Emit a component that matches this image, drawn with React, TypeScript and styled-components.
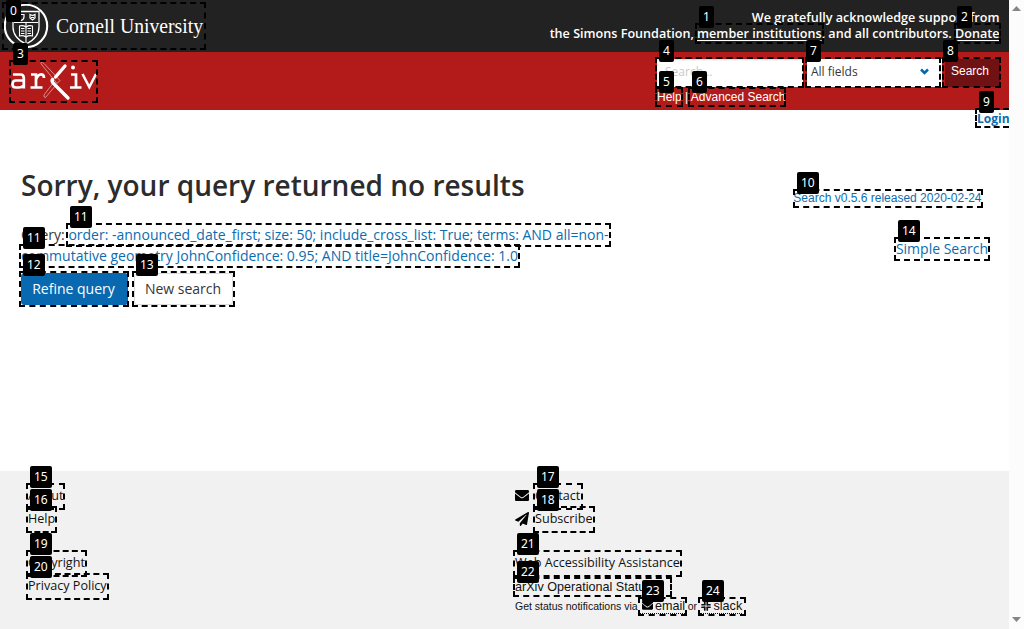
import React from "react";
import styled, { createGlobalStyle } from "styled-components";

const sans = `"Open Sans", "Noto Sans", sans-serif`;
const arial = `"Liberation Sans", Arial, sans-serif`;

const Global = createGlobalStyle`
  *, *::before, *::after { box-sizing: border-box; }
  html, body { margin: 0; overflow: hidden; }
  body { font-family: ${sans}; background: #fff; color: #222; }
`;

const Screen = styled.div`
  position: relative;
  display: flex;
  width: 1024px;
  height: 629px;
  overflow: hidden;
`;
const Page = styled.div`
  display: flex;
  flex-direction: column;
  width: 1009px;
  overflow: hidden;
`;
const Scrollbar = styled.div`
  width: 15px;
  background: #fcfcfc;
  display: flex;
  flex-direction: column;
  justify-content: space-between;
  align-items: center;
  padding: 6px 0 7px;
  svg { display: block; }
`;
const TopBar = styled.div`
  flex: none;
  height: 52px;
  background: #222;
  color: #fff;
  display: flex;
  justify-content: space-between;
  padding: 2px 9.5px 0 4px;
`;
const Sponsors = styled.div`
  padding-top: 8px;
  text-align: right;
  font-size: 12.6px;
  line-height: 16px;
  font-weight: 600;
  white-space: nowrap;
  a { text-decoration: underline; text-underline-offset: 2px; }
`;
const Banner = styled.header`
  flex: none;
  height: 58px;
  background: #b31b1b;
  display: flex;
  justify-content: space-between;
  padding: 7px 9px 0 10px;
`;
const SearchArea = styled.div`
  width: 343px;
`;
const Fields = styled.div`
  display: flex;
  gap: 3px;
  height: 28px;
`;
const Input = styled.div`
  width: 146px;
  background: #fff;
  box-shadow: inset 0 1px 2px rgba(10, 10, 10, 0.15);
  color: #c9c9c9;
  font: 12px/25px ${sans};
  padding-left: 8px;
`;
const Select = styled.div`
  width: 135px;
  margin-left: 1px;
  background: #fff;
  color: #363636;
  font: 12px/24px ${sans};
  padding: 0 13px 3px 4px;
  display: flex;
  align-items: center;
  justify-content: space-between;
`;
const SearchButton = styled.div`
  flex: 1;
  background: #701113;
  color: #fff;
  font: 12px/25px ${arial};
  padding-right: 5px;
  text-align: center;
`;
const SearchLinks = styled.div`
  color: #fff;
  font: 12px/20px ${arial};
`;
const LoginRow = styled.div`
  flex: none;
  height: 48px;
  padding-left: 977px;
  font-size: 12px;
  line-height: 17px;
  font-weight: 700;
  white-space: nowrap;
  color: #0a6cb1;
`;
const Main = styled.main`
  flex: none;
  height: 313px;
  padding: 3px 21px 0;
  display: flex;
  justify-content: space-between;
`;
const Heading = styled.h1`
  margin: 0 0 15px;
  font-size: 28px;
  line-height: 48px;
  font-weight: 600;
  color: #2c2c2c;
  white-space: nowrap;
`;
const Query = styled.p`
  margin: 0 0 7px;
  font-size: 14px;
  line-height: 21px;
  color: #363636;
  white-space: nowrap;
`;
const Link = styled.a`
  color: #0a6cb1;
`;
const Buttons = styled.div`
  display: flex;
  gap: 6px;
`;
const Button = styled.div<{ $primary?: boolean }>`
  width: ${(p) => (p.$primary ? 107 : 99)}px;
  height: 32px;
  padding-right: ${(p) => (p.$primary ? 2 : 1)}px;
  border: 1px solid ${(p) => (p.$primary ? "#0868b0" : "#dbdbdb")};
  border-radius: 3px;
  background: ${(p) => (p.$primary ? "#0868b0" : "#fff")};
  color: ${(p) => (p.$primary ? "#fff" : "#363636")};
  font-size: 14px;
  line-height: 29px;
  text-align: center;
  white-space: nowrap;
`;
const Side = styled.div`
  display: flex;
  flex-direction: column;
  align-items: flex-end;
  padding-top: 29px;
  white-space: nowrap;
`;
const Release = styled(Link)`
  margin-right: 6.5px;
  font: 12px/16px ${arial};
`;
const Simple = styled(Link)`
  margin-top: 32px;
  font-size: 14px;
  line-height: 21px;
`;
const Footer = styled.footer`
  flex: 1;
  background: #f1f1f1;
  display: flex;
  padding: 13px 28px 0;
  color: #111;
`;
const FooterCol = styled.div<{ $width: number }>`
  width: ${(p) => p.$width}px;
  white-space: nowrap;
`;
const FooterGroup = styled.div`
  height: 67px;
`;
const FooterItem = styled.div`
  display: flex;
  align-items: center;
  gap: 6px;
  height: 23px;
  font-size: 12.6px;
  line-height: 23px;
  svg { display: block; }
`;
const StatusLine = styled.div`
  font: 12.6px/20px ${arial};
  padding-top: 3px;
`;
const Notify = styled.div`
  display: flex;
  align-items: center;
  font: 10.5px/18px ${arial};
`;
const Channel = styled.span`
  display: flex;
  align-items: center;
  gap: 2.5px;
  margin: 0 2.5px;
  padding-left: 1.5px;
  height: 15px;
  border-bottom: 1px dotted #111;
  font-size: 12.6px;
`;

const Frame = styled.div<{ $b: number[] }>`
  position: absolute;
  left: ${(p) => p.$b[0]}px;
  top: ${(p) => p.$b[1]}px;
  width: ${(p) => p.$b[2] - p.$b[0]}px;
  height: ${(p) => p.$b[3] - p.$b[1]}px;
  border: 2px dashed #000;
  border-right-width: ${(p) => (p.$b[2] === 1009 ? 0 : 2)}px;
`;
const Badge = styled.div<{ $b: number[] }>`
  position: absolute;
  left: ${(p) => p.$b[0] + (p.$b[4] ?? 4)}px;
  top: ${(p) => Math.max(0, p.$b[1] - (p.$b[5] ?? 17))}px;
  height: 22px;
  padding: 0 4px;
  border-radius: 2px;
  background: #000;
  color: #fff;
  font: 12px/21px "Noto Sans", sans-serif;
`;

/* index, left, top, right, bottom, then optional badge offsets (dx, dy) */
const frames: number[][] = [
  [0, 2, 2, 206, 50],
  [1, 695, 23, 824, 44],
  [2, 954, 23, 1001, 44, 3],
  [3, 9, 60, 98, 103],
  [4, 655, 57, 804, 88],
  [5, 655, 87, 683, 107, 4, 16],
  [6, 688, 87, 786, 107, 4, 16],
  [7, 805, 57, 941, 88, 1],
  [8, 942, 57, 1001, 88, 1],
  [9, 975, 108, 1009, 128],
  [10, 793, 189, 983, 208],
  [11, 66, 223, 611, 247],
  [11, 19, 244, 520, 268],
  [12, 19, 271, 129, 307],
  [13, 132, 271, 235, 307],
  [14, 894, 237, 990, 261],
  [15, 26, 483, 65, 510],
  [16, 26, 506, 57, 533],
  [17, 533, 483, 583, 510],
  [18, 533, 506, 595, 533],
  [19, 26, 550, 87, 577],
  [20, 26, 573, 109, 600],
  [21, 513, 550, 682, 577],
  [22, 513, 577, 672, 597, 4, 16],
  [23, 638, 597, 687, 616],
  [24, 698, 597, 746, 616],
];

const CornellLogo = () => (
  <svg width="204" height="48" viewBox="0 0 204 48">
    <g fill="none" stroke="#fff">
      <circle cx="22" cy="24" r="21.2" strokeWidth="2.100" />
      <path d="M9 9.500H35V25C35 33 29.500 38.500 22 42C14.500 38.500 9 33 9 25Z" strokeWidth="1.3" />
      <path d="M10 20.500H34M22 20.500V41" strokeWidth="1.100" />
      <path d="M15.500 24C18 23.200 20 23.700 22 25C24 23.700 26 23.200 28.500 24V34C26 33.200 24 33.700 22 35C20 33.700 18 33.200 15.500 34Z" strokeWidth="1.1" />
      <path d="M17 26.500H20.500M17 29H20.500M17 31.500H20.500M23.500 26.500H27M23.500 29H27M23.500 31.500H27" strokeWidth="1" />
      <path d="M14 12.500H20V15C20 17 18.500 18 17 18.500C15.500 18 14 17 14 15Z" strokeWidth="1.200" />
      <path d="M26 12.500L28.500 13.500L31 12.500V16L28.500 18L26 16ZM27 15.500H30" strokeWidth="1.2" />
    </g>
    <text x="52" y="31" fill="#fff" fontFamily='"Liberation Serif", serif' fontSize="22" textLength="147" lengthAdjust="spacingAndGlyphs">
      Cornell University
    </text>
  </svg>
);

const ArxivLogo = () => (
  <svg width="88" height="42" viewBox="0 0 88 42">
    <g fill="none" stroke="#fff" strokeWidth="2.700">
      <path d="M3 15.500H10.500Q13.800 15.500 13.800 19V29.500M13.800 21.500H6Q2.500 21.500 2.500 25.300Q2.500 28.500 6 28.500H9Q12 28.500 13.800 26.500" />
      <path d="M21 15.500H26V28.500M20.500 28.500H32.500M26 20.500Q28 15.300 31 15.300Q34 15.300 34 19" />
      <path d="M61 15.500H66V28.500M60 28.500H71.500" />
      <path d="M72.500 15L79.300 28L86 15" strokeWidth="2.500" />
    </g>
    <circle cx="63" cy="8.500" r="2" fill="#fff" />
    <path d="M31 3.500Q32 2 34 4.500L50 21.500L47 24.500L32 6Q30.500 4.500 31 3.500ZM46 26L35.500 38.500Q33.500 38.500 34 36L43.500 23.500" fill="none" stroke="#fff" strokeWidth="0.7" opacity="0.7" />
    <path d="M55 7L45.500 18M42.500 20.500Q41.500 22 43 24L58 39" fill="none" stroke="#fff" strokeWidth="3.400" strokeLinecap="round" />
  </svg>
);

const Envelope = ({ width = 14 }: { width?: number }) => (
  <svg width={width} height={(width * 11) / 14} viewBox="0 64 512 384" preserveAspectRatio="none">
    <path d="M502 191c4-3 10 0 10 5v204c0 27-21 48-48 48H48c-27 0-48-21-48-48V196c0-5 6-8 10-5 22 17 52 40 155 114 21 16 57 48 91 48s70-33 91-48c103-74 133-97 155-114zM256 320c23 0 57-29 74-42 133-96 143-105 173-128 6-5 9-12 9-19v-19c0-27-21-48-48-48H48c-27 0-48 21-48 48v19c0 7 3 14 9 19 31 24 41 32 173 128 17 13 51 42 74 42z" />
  </svg>
);

const Plane = () => (
  <svg width="14" height="14" viewBox="0 0 512 512">
    <path d="M476 3L12 271c-18 10-16 36 2 43l107 45L409 105c5-5 13 2 9 8L176 407v81c0 23 28 33 42 15l64-78 125 53c14 6 31-3 33-19L512 28c3-20-18-34-36-25z" />
  </svg>
);

const Slack = () => (
  <svg width="10" height="10" viewBox="0 0 20 20">
    <path d="M7.500 2V6M7.500 12V18M12.500 2V8M12.500 14V18M2 7.500H8M14 7.500H18M2 12.500H6M12 12.500H18" fill="none" stroke="#111" strokeWidth="3.400" strokeLinecap="round" />
  </svg>
);

export default function App() {
  return (
    <Screen>
      <Global />
      <Page>
        <TopBar>
          <CornellLogo />
          <Sponsors>
            We gratefully acknowledge support from
            <br />
            the Simons Foundation, <a>member institutions</a>. and all contributors. <a>Donate</a>
          </Sponsors>
        </TopBar>
        <Banner>
          <ArxivLogo />
          <SearchArea>
            <Fields>
              <Input>Search...</Input>
              <Select>
                All fields
                <svg width="9" height="7" viewBox="0 0 9 7">
                  <path d="M1 1.500L4.500 5L8 1.500" fill="none" stroke="#0068ac" strokeWidth="2.500" />
                </svg>
              </Select>
              <SearchButton>Search</SearchButton>
            </Fields>
            <SearchLinks>Help | Advanced Search</SearchLinks>
          </SearchArea>
        </Banner>
        <LoginRow>Login</LoginRow>
        <Main>
          <div>
            <Heading>Sorry, your query returned no results</Heading>
            <Query>
              Query:{" "}
              <Link>
                order: -announced_date_first; size: 50; include_cross_list: True; terms: AND all=non-
                <br />
                commutative geometry JohnConfidence: 0.95; AND title=JohnConfidence: 1.0
              </Link>
            </Query>
            <Buttons>
              <Button $primary>Refine query</Button>
              <Button>New search</Button>
            </Buttons>
          </div>
          <Side>
            <Release>Search v0.5.6 released 2020-02-24</Release>
            <Simple>Simple Search</Simple>
          </Side>
        </Main>
        <Footer>
          <FooterCol $width={487}>
            <FooterGroup>
              <FooterItem>About</FooterItem>
              <FooterItem>Help</FooterItem>
            </FooterGroup>
            <FooterItem>Copyright</FooterItem>
            <FooterItem>Privacy Policy</FooterItem>
          </FooterCol>
          <FooterCol $width={460}>
            <FooterGroup>
              <FooterItem><Envelope />Contact</FooterItem>
              <FooterItem><Plane />Subscribe</FooterItem>
            </FooterGroup>
            <FooterItem>Web Accessibility Assistance</FooterItem>
            <StatusLine>arXiv Operational Status</StatusLine>
            <Notify>
              Get status notifications via
              <Channel><Envelope width={11} />email</Channel>
              or
              <Channel><Slack />slack</Channel>
            </Notify>
          </FooterCol>
        </Footer>
      </Page>
      <Scrollbar>
        <svg width="9" height="5"><path d="M0 5L4.500 0L9 5Z" fill="#858585" /></svg>
        <svg width="9" height="5"><path d="M0 0H9L4.500 5Z" fill="#858585" /></svg>
      </Scrollbar>
      {frames.map(([n, ...b], i) => <Frame key={i} $b={b} />)}
      {frames.map(([n, ...b], i) => <Badge key={i} $b={b}>{n}</Badge>)}
    </Screen>
  );
}
